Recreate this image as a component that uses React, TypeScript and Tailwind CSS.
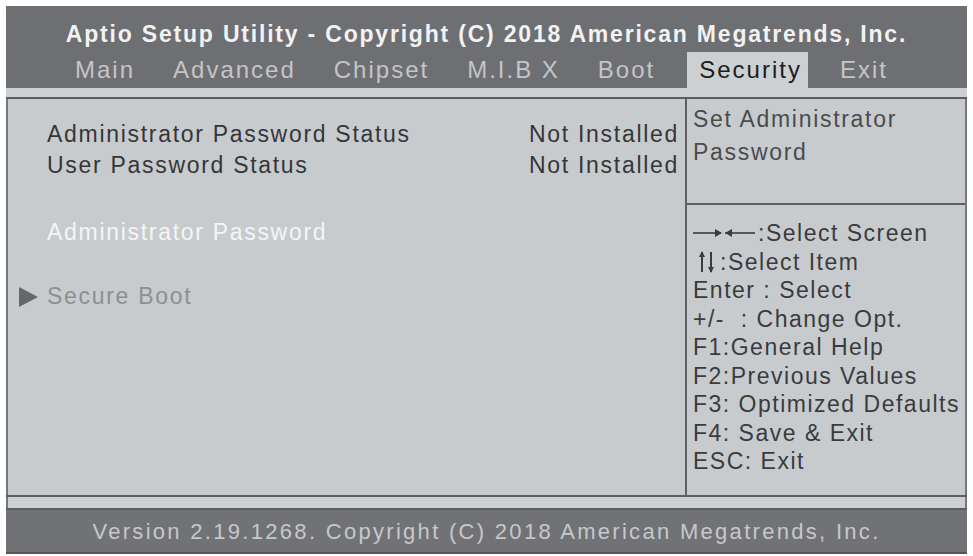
const tabs = ["Main", "Advanced", "Chipset", "M.I.B X", "Boot", "Security", "Exit"];

function RightLeftArrows() {
  return (
    <svg width="62" height="14" viewBox="0 0 62 14" className="mr-[3px]">
      <line x1="0" y1="7" x2="28" y2="7" stroke="#3a3b3d" strokeWidth="1.6" />
      <polygon points="22,3 29,7 22,11" fill="#3a3b3d" />
      <line x1="32" y1="7" x2="62" y2="7" stroke="#3a3b3d" strokeWidth="1.6" />
      <polygon points="39,3 32,7 39,11" fill="#3a3b3d" />
    </svg>
  );
}

function UpDownArrows() {
  return (
    <svg width="16" height="24" viewBox="0 0 16 24" className="ml-[6px] mr-[5px]">
      <line x1="3" y1="2" x2="3" y2="22" stroke="#3a3b3d" strokeWidth="2" />
      <polygon points="0,7 3,1 6,7" fill="#3a3b3d" />
      <line x1="12" y1="2" x2="12" y2="22" stroke="#3a3b3d" strokeWidth="2" />
      <polygon points="9,17 12,23 15,17" fill="#3a3b3d" />
    </svg>
  );
}

const help: [React.ReactNode, string][] = [
  [<RightLeftArrows key="a" />, ":Select Screen"],
  [<UpDownArrows key="b" />, ":Select Item"],
  ["Enter", " : Select"],
  ["+/-", "  : Change Opt."],
  ["F1", ":General Help"],
  ["F2", ":Previous Values"],
  ["F3", ": Optimized Defaults"],
  ["F4", ": Save & Exit"],
  ["ESC", ": Exit"],
];

export default function App() {
  return (
    <div
      className="w-[973px] h-[556px] bg-white pt-[6px] px-[6px]"
      style={{ fontFamily: '"Liberation Sans", Arial, sans-serif' }}
    >
      <div className="w-[961px] flex flex-col">
        {/* header */}
        <div className="bg-[#6e6f72] h-[82px] flex flex-col items-center">
          <div className="mt-[14px] text-[23px] leading-[28px] font-bold text-[#f2f2f2] tracking-[1.8px]">
            Aptio Setup Utility - Copyright (C) 2018 American Megatrends, Inc.
          </div>
          <div className="mt-[4px] flex items-end gap-[26px] h-[36px] w-full pl-[63px] text-[24px] tracking-[2px] text-[#c4c5c7]">
            {tabs.map((t) => (
              <div
                key={t}
                className={
                  t === "Security"
                    ? "h-[36px] pl-[12px] pr-[6px] bg-[#cdd0d3] text-[#1c1c1c] flex items-center"
                    : "h-[36px] px-[6px] flex items-center"
                }
              >
                {t}
              </div>
            ))}
          </div>
        </div>
        <div className="h-[9px] bg-[#cdd0d3]" />
        <div className="h-[2px] bg-[#5c5d60]" />

        {/* body */}
        <div className="flex h-[396px] bg-[#c8cbce] border-l-2 border-r-2 border-[#76777a] text-[23px] tracking-[1.7px]">
          <div className="w-[677px] flex flex-col pt-[20px] leading-[31px]">
            <div className="flex justify-between pl-[39px] pr-[6px] text-[#353638]">
              <span>Administrator Password Status</span>
              <span>Not Installed</span>
            </div>
            <div className="flex justify-between pl-[39px] pr-[6px] text-[#353638]">
              <span>User Password Status</span>
              <span>Not Installed</span>
            </div>
            <div className="pl-[39px] mt-[36px] text-[#f4f5f6]">Administrator Password</div>
            <div className="flex items-center mt-[33px] pl-[10px] text-[#8d8f92]">
              <svg width="20" height="20" viewBox="0 0 20 20" className="mr-[9px]">
                <polygon points="1,0 20,10 1,20" fill="#66676a" />
              </svg>
              Secure Boot
            </div>
          </div>
          <div className="w-[2px] bg-[#5e5f62]" />
          <div className="flex-1 flex flex-col">
            <div className="h-[104px] pl-[6px] pt-[4px] leading-[33px] text-[#4a4b4d]">
              <div>Set Administrator</div>
              <div>Password</div>
            </div>
            <div className="h-[2px] bg-[#5e5f62]" />
            <div className="pl-[6px] pt-[14px] leading-[28.5px] text-[#3a3b3d] tracking-[1.5px]">
              {help.map(([k, v], i) => (
                <div key={i} className="whitespace-pre flex items-center h-[28.5px]">
                  {k}
                  {v}
                </div>
              ))}
            </div>
          </div>
        </div>
        <div className="h-[2px] bg-[#5c5d60]" />
        <div className="h-[11px] bg-[#cdd0d3] border-l-2 border-r-2 border-[#76777a]" />
        <div className="h-[2px] bg-[#5c5d60]" />
        <div className="h-[42px] bg-[#717276] flex items-center justify-center text-[22px] tracking-[2.3px] text-[#c7c8ca]">
          Version 2.19.1268. Copyright (C) 2018 American Megatrends, Inc.
        </div>
        <div className="h-[2px] bg-[#55565a]" />
      </div>
    </div>
  );
}
